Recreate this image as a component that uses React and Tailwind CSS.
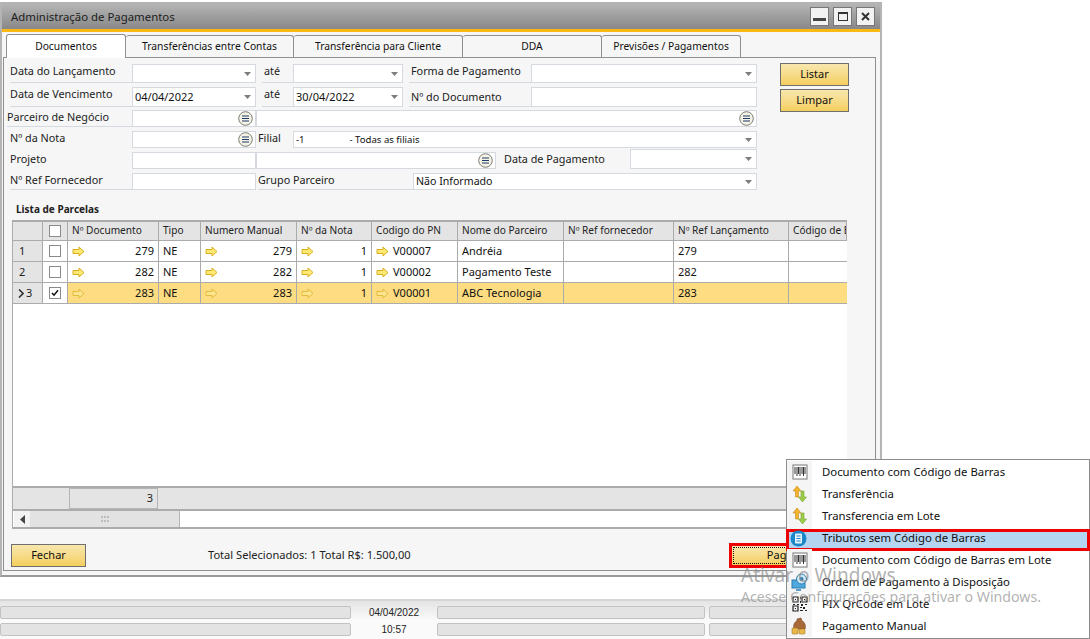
import React from 'react';

const font = { fontFamily: '"Noto Sans", "Liberation Sans", sans-serif' };

const Arrow = ({ pale }) => (
  <svg width="13" height="11" viewBox="0 0 13 11" className="shrink-0">
    <path
      d="M1 3.5h6V1l5 4.5L7 10V7.5H1z"
      fill={pale ? '#fbe48e' : '#ffe873'}
      stroke={pale ? '#e2bc3c' : '#d9ae1e'}
      strokeWidth="1"
    />
  </svg>
);

const Caret = () => (
  <svg width="7" height="4" viewBox="0 0 7 4" className="shrink-0">
    <path d="M0 0h7L3.5 4z" fill="#7d7d7d" />
  </svg>
);

const Lookup = () => (
  <svg width="15" height="15" viewBox="0 0 15 15" className="shrink-0">
    <circle cx="7.5" cy="7.5" r="6.8" fill="#f4f2e2" stroke="#7b7b78" />
    <path d="M4 5h7M4 7.5h7M4 10h7" stroke="#1f3a6e" strokeWidth="1" />
  </svg>
);

const Field = ({ w, h = 'h-full', value, caret, lookup, size = 'text-[11px]' }) => (
  <div className={`${w} ${h} shrink-0 bg-white border border-[#d5dae0] flex items-center justify-between pl-[2px] pr-[4px]`}>
    <span className={`${size} whitespace-pre text-[#111] pt-[1px]`}>{value}</span>
    {caret && <Caret />}
    {lookup && <span className="-mr-[2px]"><Lookup /></span>}
  </div>
);

const Label = ({ w, pl = 'pl-0', text, ml = 'ml-[6px]', line = true }) => (
  <div className={`${w} ${ml} ${pl} h-full shrink-0 text-[10.8px] leading-[14px] text-[#222] whitespace-nowrap ${line ? 'border-b border-[#d5dae0]' : ''}`}>
    {text}
  </div>
);

const YellowButton = ({ text, w, h = 'h-[23px]' }) => (
  <button className={`${w} ${h} shrink-0 border border-[#6f6f6f] bg-gradient-to-b from-[#f8e7ae] to-[#f5cf5c] text-[11px] text-[#111]`}>
    {text}
  </button>
);

const columns = 'grid grid-cols-[30px_25px_91px_42px_96px_75px_86px_106px_110px_115px_58px]';
const headers = ['Nº Documento', 'Tipo', 'Numero Manual', 'Nº da Nota', 'Codigo do PN', 'Nome do Parceiro', 'Nº Ref fornecedor', 'Nº Ref Lançamento', 'Código de Barras'];
const rows = [
  { n: '1', doc: '279', pn: 'V00007', nome: 'Andréia' },
  { n: '2', doc: '282', pn: 'V00002', nome: 'Pagamento Teste' },
  { n: '3', doc: '283', pn: 'V00001', nome: 'ABC Tecnologia', selected: true },
];

const Box = ({ checked }) => (
  <div className="w-[12px] h-[12px] bg-white border border-[#8a8a8a] flex items-center justify-center">
    {checked && (
      <svg width="8" height="8" viewBox="0 0 8 8">
        <path d="M1 4l2 2.2L7 1.2" fill="none" stroke="#111" strokeWidth="1.5" />
      </svg>
    )}
  </div>
);

const Row = ({ row }) => {
  const bg = row.selected ? 'bg-[#fddc82]' : 'bg-white';
  const cell = `${bg} h-[21px] border-r border-b border-[#ababab] flex items-center px-[4px] text-[11px] text-[#111] overflow-hidden whitespace-nowrap`;
  return (
    <div className={columns}>
      <div className="h-[21px] bg-[#e4e4e4] border-r border-b border-[#ababab] flex items-center pl-[6px] text-[11px] text-[#222]">
        {row.selected && (
          <svg width="6" height="9" viewBox="0 0 6 9" className="mr-[2px] -ml-[1px]">
            <path d="M1 .5l4 4-4 4" fill="none" stroke="#333" strokeWidth="1.6" />
          </svg>
        )}
        {row.n}
      </div>
      <div className="h-[21px] bg-white border-r border-b border-[#ababab] flex items-center justify-center">
        <Box checked={row.selected} />
      </div>
      <div className={`${cell} justify-between`}><Arrow pale={row.selected} /><span>{row.doc}</span></div>
      <div className={`${cell}`}>NE</div>
      <div className={`${cell} justify-between`}><Arrow pale={row.selected} /><span>{row.doc}</span></div>
      <div className={`${cell} justify-between`}><Arrow pale={row.selected} /><span>1</span></div>
      <div className={`${cell} gap-[4px]`}><Arrow pale={row.selected} /><span>{row.pn}</span></div>
      <div className={cell}>{row.nome}</div>
      <div className={cell}></div>
      <div className={cell}>{row.doc}</div>
      <div className={`${bg} h-[21px] border-b border-[#ababab]`}></div>
    </div>
  );
};

const BarcodeIcon = () => (
  <svg width="16" height="16" viewBox="0 0 16 16">
    <rect x="1" y="1" width="14" height="14" fill="#fff" stroke="#777" />
    <path d="M3 3v7M5 3v9M6.5 3v7M8 3v9M10 3v7M11.5 3v9M13 3v7" stroke="#333" strokeWidth="1" />
  </svg>
);

const TransferIcon = () => (
  <svg width="16" height="18" viewBox="0 0 16 18">
    <path d="M5 1L1 6h2.5v6h3V6H9z" fill="#f1b42c" stroke="#c98a12" strokeWidth=".6" />
    <path d="M10.5 17l4-5H12V6H9v6H6.5z" fill="#9ccb4a" stroke="#76a42c" strokeWidth=".6" />
  </svg>
);

const BlueDocIcon = () => (
  <svg width="17" height="17" viewBox="0 0 17 17">
    <circle cx="8.5" cy="8.5" r="8" fill="#1b87c9" />
    <rect x="5" y="3.5" width="7" height="10" rx="1" fill="#e8f4fb" />
    <path d="M6.5 6h4M6.5 8.5h4M6.5 11h4" stroke="#1b87c9" strokeWidth="1" />
  </svg>
);

const MonitorIcon = () => (
  <svg width="18" height="18" viewBox="0 0 18 18">
    <rect x="1" y="7" width="13" height="8" fill="#4fa9dc" stroke="#2b7db0" />
    <path d="M5 17h5" stroke="#2b7db0" strokeWidth="1.5" />
    <circle cx="10.5" cy="6" r="5" fill="#cfe6f4" stroke="#2b7db0" />
    <circle cx="10.5" cy="6" r="2" fill="#2b7db0" />
  </svg>
);

const QrIcon = () => (
  <svg width="16" height="16" viewBox="0 0 16 16">
    <path d="M1 1h5v5H1zM10 1h5v5h-5zM1 10h5v5H1z" fill="none" stroke="#222" strokeWidth="1.2" />
    <path d="M3 3h1v1H3zM12 3h1v1h-1zM3 12h1v1H3zM8 1h1v2H8zM8 5h1v2H8zM1 8h2v1H1zM5 8h2v1H5zM9 8h2v2H9zM13 8h2v1h-2zM8 11h2v1H8zM11 11h2v2h-2zM8 14h3v1H8zM13 14h2v1h-2z" fill="#222" />
  </svg>
);

const MoneyIcon = () => (
  <svg width="18" height="18" viewBox="0 0 18 18">
    <path d="M6 2l4-1 1 3c3 1 4 5 3 8H3c-1-3 0-7 3-8z" fill="#a8683a" stroke="#75431f" strokeWidth=".6" />
    <rect x="1" y="11" width="6" height="6" rx="1" fill="#e9b84a" stroke="#a87a1e" strokeWidth=".6" />
    <rect x="8" y="12" width="6" height="5" rx="1" fill="#e9b84a" stroke="#a87a1e" strokeWidth=".6" />
  </svg>
);

const menuItems = [
  { icon: <BarcodeIcon />, text: 'Documento com Código de Barras' },
  { icon: <TransferIcon />, text: 'Transferência' },
  { icon: <TransferIcon />, text: 'Transferencia em Lote' },
  { icon: <BlueDocIcon />, text: 'Tributos sem Código de Barras', active: true },
  { icon: <BarcodeIcon />, text: 'Documento com Código de Barras em Lote' },
  { icon: <MonitorIcon />, text: 'Ordem de Pagamento à Disposição' },
  { icon: <QrIcon />, text: 'PIX QrCode em Lote' },
  { icon: <MoneyIcon />, text: 'Pagamento Manual' },
];

const tabs = [
  { text: 'Documentos', w: 'w-[120px]', active: true },
  { text: 'Transferências entre Contas', w: 'w-[168px]' },
  { text: 'Transferência para Cliente', w: 'w-[169px]' },
  { text: 'DDA', w: 'w-[139px]' },
  { text: 'Previsões / Pagamentos', w: 'w-[139px]' },
];

const StatusBar = ({ w }) => (
  <div className={`${w} h-[13px] shrink-0 bg-[#e3e3e3] border border-[#c2c2c2] rounded-[2px]`}></div>
);

const StatusText = ({ text }) => (
  <div className="w-[86px] shrink-0 text-center text-[10px] leading-[13px] text-[#222] font-['Liberation_Sans']">{text}</div>
);

const App = () => {
  return (
    <div className="relative w-[1090px] h-[639px] overflow-hidden bg-white flex flex-col pt-[2px]" style={font}>
      {/* Janela */}
      <div className="w-[882px] h-[575px] shrink-0 bg-[#f6f6f6] border-2 border-[#b4b4b4] border-b-[#9a9a9a] flex flex-col">
        <div className="h-[25px] shrink-0 bg-gradient-to-b from-[#b5b5b5] to-[#888888] flex items-center justify-between pl-[9px] pr-[5px]">
          <span className="text-[11.4px] text-[#1c1c1c]">Administração de Pagamentos</span>
          <div className="flex gap-[4px]">
            <div className="w-[19px] h-[19px] bg-[#f2f2f2] border border-[#777] flex items-end justify-center pb-[4px]">
              <div className="w-[13px] h-[3px] bg-[#444]"></div>
            </div>
            <div className="w-[19px] h-[19px] bg-[#f2f2f2] border border-[#777] flex items-center justify-center">
              <div className="w-[10px] h-[9px] border border-t-2 border-[#333]"></div>
            </div>
            <div className="w-[19px] h-[19px] bg-[#f2f2f2] border border-[#777] flex items-center justify-center">
              <svg width="9" height="9" viewBox="0 0 9 9">
                <path d="M1 1l7 7M8 1L1 8" stroke="#333" strokeWidth="2" />
              </svg>
            </div>
          </div>
        </div>
        <div className="h-[3px] shrink-0 bg-[#fdb913]"></div>

        {/* Abas */}
        <div className="flex pl-[4px] pt-[3px] h-[25px] shrink-0">
          {tabs.map((tab) => (
            <div
              key={tab.text}
              className={`${tab.w} shrink-0 flex items-center justify-center text-[10.3px] text-[#111] rounded-t-[3px] border-t border-r border-[#8f8f8f] ${tab.active ? 'bg-white border-l -mt-[1px] z-10 relative h-[24px]' : 'bg-[#f6f6f6] h-[22px]'}`}
            >
              {tab.text}
            </div>
          ))}
        </div>

        {/* Painel */}
        <div className="mx-[1px] w-[873px] h-[514px] shrink-0 border border-[#8f8f8f] flex flex-col">
          <div className="flex">
            <div className="w-[753px] shrink-0 flex flex-col">
              <div className="flex h-[19px] mt-[6px]">
                <Label w="w-[122px]" text="Data do Lançamento" />
                <Field w="w-[124px]" caret />
                <Label w="w-[31px]" text="até" pl="pl-[2px]" />
                <Field w="w-[110px]" caret />
                <Label w="w-[122px]" text="Forma de Pagamento" pl="pl-[2px]" />
                <Field w="w-[226px]" caret />
              </div>
              <div className="flex h-[20px] mt-[4px]">
                <Label w="w-[122px]" text="Data de Vencimento" />
                <Field w="w-[124px]" value="04/04/2022" caret />
                <Label w="w-[31px]" text="até" pl="pl-[2px]" />
                <Field w="w-[110px]" value="30/04/2022" caret />
                <div className="w-[122px] ml-[6px] pl-[2px] h-full shrink-0 pt-[3px] text-[10.8px] leading-[14px] text-[#222] border-b border-[#d5dae0]">Nº do Documento</div>
                <Field w="w-[226px]" />
              </div>
              <div className="flex h-[17px] mt-[3px]">
                <Label w="w-[125px]" ml="ml-[3px]" text="Parceiro de Negócio" />
                <Field w="w-[124px]" lookup />
                <Field w="w-[501px]" lookup />
              </div>
              <div className="flex h-[17px] mt-[4px]">
                <Label w="w-[122px]" text="Nº da Nota" line={false} />
                <Field w="w-[124px]" lookup />
                <Label w="w-[35px]" ml="ml-[2px]" text="Filial" line={false} />
                <Field w="w-[464px]" value="-1                  - Todas as filiais" size="text-[9.6px]" caret />
              </div>
              <div className="flex h-[17px] mt-[4px] items-end">
                <Label w="w-[122px]" text="Projeto" line={false} />
                <Field w="w-[124px]" />
                <Field w="w-[240px]" lookup />
                <Label w="w-[126px]" ml="ml-[8px]" text="Data de Pagamento" line={false} />
                <Field w="w-[127px]" h="h-[20px]" caret />
              </div>
              <div className="flex h-[17px] mt-[4px]">
                <Label w="w-[122px]" text="Nº Ref Fornecedor" />
                <Field w="w-[124px]" />
                <Label w="w-[155px]" ml="ml-[2px]" text="Grupo Parceiro" />
                <Field w="w-[344px]" value="Não Informado" size="text-[10.6px]" caret />
              </div>
            </div>
            <div className="ml-[23px] pt-[5px] flex flex-col gap-[3px]">
              <YellowButton text="Listar" w="w-[69px]" />
              <YellowButton text="Limpar" w="w-[69px]" />
            </div>
          </div>

          <div className="ml-[12px] mt-[12px] h-[14px] text-[10px] leading-[14px] font-bold text-[#222]">Lista de Parcelas</div>

          {/* Grade */}
          <div className="ml-[8px] mt-[4px] w-[835px] h-[309px] shrink-0 border-l border-t-2 border-b-2 border-[#ababab] bg-white flex flex-col overflow-hidden">
            <div className={columns}>
              <div className="h-[19px] bg-[#e4e4e4] border-r border-b border-[#ababab]"></div>
              <div className="h-[19px] bg-[#e4e4e4] border-r border-b border-[#ababab] flex items-center justify-center"><Box /></div>
              {headers.map((h) => (
                <div key={h} className="h-[19px] bg-[#e4e4e4] border-r border-b border-[#ababab] flex items-center px-[4px] text-[10.1px] text-[#222] whitespace-nowrap overflow-hidden">{h}</div>
              ))}
            </div>
            {rows.map((row) => <Row key={row.n} row={row} />)}
            <div className="flex-1"></div>
            <div className="h-[25px] shrink-0 bg-[#e4e4e4] border-t-2 border-b-2 border-[#ababab] flex items-center pl-[56px]">
              <div className="w-[89px] h-[21px] border border-[#b5b5b5] flex items-center justify-end pr-[4px] text-[11px] text-[#222]">3</div>
            </div>
            <div className="h-[16px] shrink-0 flex pl-[1px]">
              <div className="w-[16px] bg-[#f2f2f2] flex items-center justify-center">
                <svg width="5" height="9" viewBox="0 0 5 9"><path d="M5 0v9L0 4.5z" fill="#444" /></svg>
              </div>
              <div className="w-[150px] bg-[#e2e2e2] border-r border-[#b5b5b5] flex items-center justify-center">
                <svg width="8" height="6" viewBox="0 0 8 6"><path d="M0 0h2v2H0zM3 0h2v2H3zM6 0h2v2H6zM0 4h2v2H0zM3 4h2v2H3zM6 4h2v2H6z" fill="#bdbdbd" /></svg>
              </div>
            </div>
          </div>

          {/* Rodapé */}
          <div className="flex items-center mt-[14px] ml-[7px] h-[25px]">
            <YellowButton text="Fechar" w="w-[75px]" />
            <span className="ml-[122px] text-[11.1px] text-[#222]">Total Selecionados: 1 Total R$: 1.500,00</span>
            <div className="ml-auto mr-[40px] w-[106px] h-[25px] border-[3px] border-[#ee0000] bg-gradient-to-b from-[#f8e7ae] to-[#f5cf5c] p-[1px]">
              <div className="w-full h-full border border-dotted border-[#111] flex items-center justify-center text-[11px] text-[#111]">Pagar</div>
            </div>
          </div>
        </div>
      </div>

      {/* Barra de status */}
      <div className="mt-[22px] flex-1 border-t-2 border-[#d6d6d6] bg-gradient-to-b from-[#e4e4e4] via-[#fafafa] to-[#fafafa] flex flex-col gap-[4px] pt-[5px]">
        <div className="flex items-center">
          <StatusBar w="w-[351px]" />
          <StatusText text="04/04/2022" />
          <StatusBar w="w-[268px]" />
          <div className="w-[4px] shrink-0"></div>
          <StatusBar w="w-[381px]" />
        </div>
        <div className="flex items-center">
          <StatusBar w="w-[351px]" />
          <StatusText text="10:57" />
          <StatusBar w="w-[268px]" />
          <div className="w-[4px] shrink-0"></div>
          <StatusBar w="w-[381px]" />
        </div>
      </div>

      {/* Menu suspenso */}
      <div className="absolute left-[786px] top-[459px] w-[304px] bg-white border border-[#8c8c8c] py-[1px] z-20">
        {menuItems.map((item) => (
          <div key={item.text} className="relative h-[22px] flex items-center">
            <div className="w-[25px] h-full shrink-0 bg-[#f5f5f5] flex items-center justify-center">{item.icon}</div>
            {item.active && <div className="absolute left-[-1px] right-[-1px] top-[2px] bottom-[-2px] bg-[#b3d5f1] border-[3px] border-[#ee0000]"></div>}
            {item.active && <div className="absolute left-[3px] top-[3px]"><BlueDocIcon /></div>}
            <span className="relative ml-[10px] text-[11.35px] text-[#111] whitespace-nowrap">{item.text}</span>
          </div>
        ))}
      </div>

      {/* Marca d'água do Windows */}
      <div className="absolute left-[741px] top-[562px] z-30 pointer-events-none text-[#8f8f8f]/70">
        <div className="text-[19px] leading-[26px]">Ativar o Windows</div>
        <div className="text-[14.15px] leading-[17px] whitespace-nowrap">Acesse Configurações para ativar o Windows.</div>
      </div>
    </div>
  );
};

export default App;
